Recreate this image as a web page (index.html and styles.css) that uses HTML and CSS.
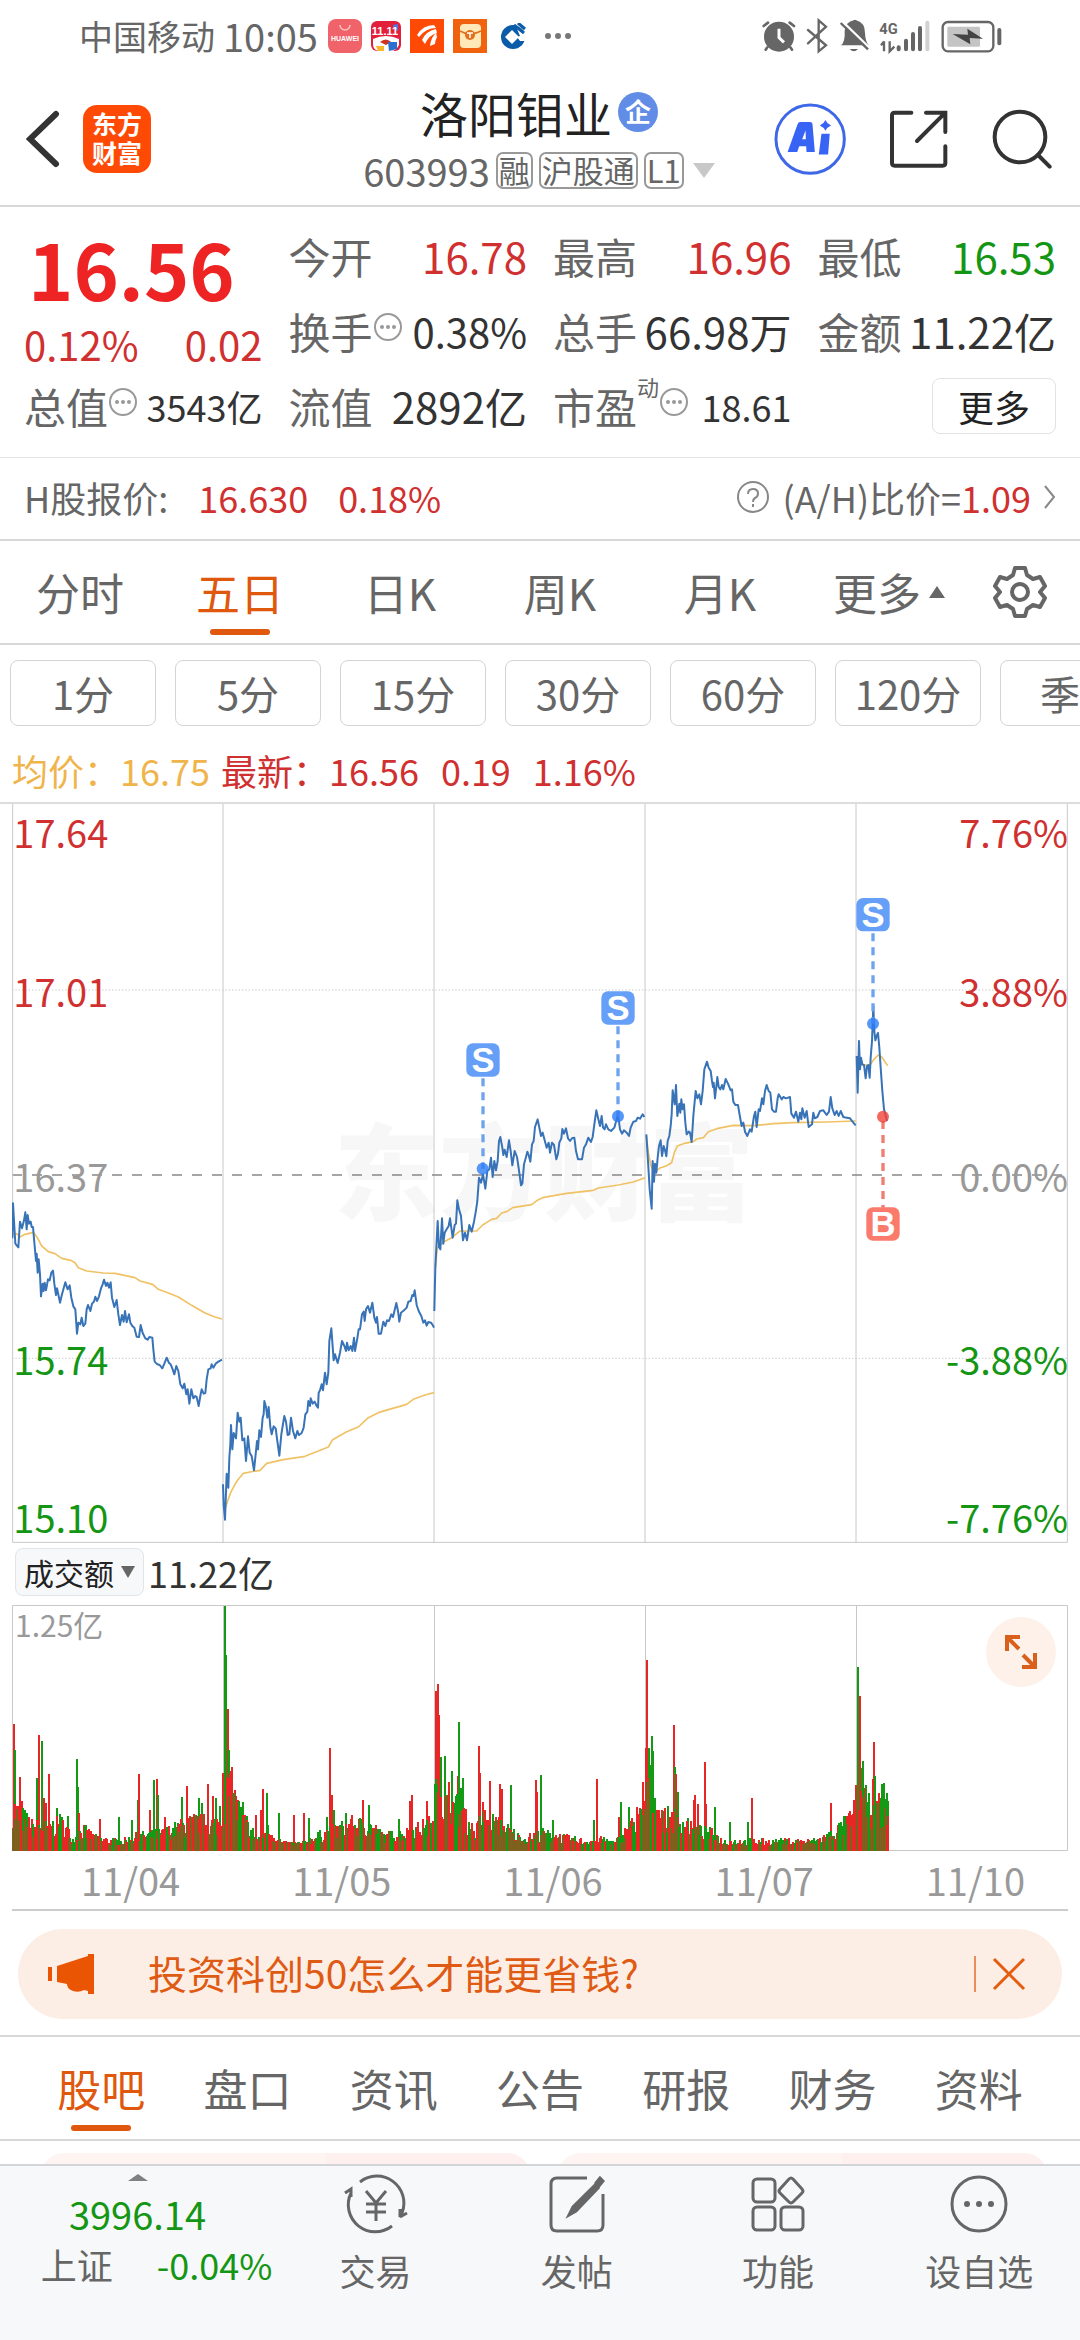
FILE: index.html
```html
<!DOCTYPE html>
<html lang="zh-CN">
<head>
<meta charset="utf-8">
<meta name="viewport" content="width=device-width">
<title>洛阳钼业 603993</title>
<link rel="stylesheet" href="styles.css">
</head>
<body>
<div class="app">
  <div class="status">
    <span class="carrier">中国移动</span><span class="clock">10:05</span>
    <div class="status-apps">
      <svg width="34" height="34" viewBox="0 0 34 34"><rect width="34" height="34" rx="8" fill="#f0636a"/><path d="M12 6a5 5 0 0 0 10 0" fill="none" stroke="#fbc3bf" stroke-width="1.5"/><text x="17" y="22" font-size="7" font-weight="700" text-anchor="middle" fill="#fff" class="latin">HUAWEI</text></svg>
      <svg width="30" height="32" viewBox="0 0 30 32"><rect y="1" width="30" height="30" rx="6" fill="#e3203c"/><path d="M2 19q13-6 26 0v6q-3 6-8 6H8q-6-1-6-7z" fill="#fff"/><path d="M9 22q6-5 11 0l-5 3z" fill="#c32"/><path d="M5 26h8v5H7z" fill="#f8b62c"/><path d="M17 22h9v7l-8 2z" fill="#2c6fd2"/><path d="M22 5l5-1v7l-4-2z" fill="#4a7be0"/><text x="14" y="15" font-size="11" font-weight="700" text-anchor="middle" fill="#fff" class="latin">11.11</text></svg>
      <svg class="app3" width="34" height="34" viewBox="0 0 34 34"><rect width="34" height="34" fill="#ff4a05"/><g fill="#fff"><path d="M7 16Q13 6 24 6l2 3Q16 9 9 18z"/><path d="M12 21Q16 12 26 10l1 4q-8 2-12 11z"/><path d="M20 27q1-9 6-13l1 4q-2 4-2 7z"/></g></svg>
      <svg class="app4" width="34" height="34" viewBox="0 0 34 34"><rect width="34" height="34" fill="#f0620e"/><rect x="7" y="5" width="21" height="24" rx="4" fill="#ffe9b8"/><path d="M7 12q10 6 21 0" fill="none" stroke="#e0701c" stroke-width="1.5"/><circle cx="17" cy="16" r="5" fill="#e2701c"/><path d="M14 14h6M17 14v5" stroke="#fff" stroke-width="1.5"/></svg>
      <svg class="app5" width="26" height="26" viewBox="0 0 26 26"><circle cx="13" cy="14" r="12" fill="#0a5ba8"/><path d="M12 7l7 7-7 7-7-7z" fill="#fff"/><path d="M14 -1l13 13v6h-7l-3-4 3-1z" fill="#fff"/><path d="M14 2l10 8M18 0l7 6" stroke="#0a5ba8" stroke-width="3"/></svg>
      <svg class="dots" width="26" height="8" viewBox="0 0 26 8" fill="#777"><circle cx="3" cy="4" r="3"/><circle cx="13" cy="4" r="3"/><circle cx="23" cy="4" r="3"/></svg>
    </div>
    <svg class="status-sys" width="240" height="36" viewBox="66 24 720 108">
      <g fill="none" stroke="#666" stroke-width="7" stroke-linecap="round">
        <path d="M71 48l13-10M149 38l13 10M82 112l-5 7M151 112l5 7" stroke-width="8"/>
        <path d="M204 60l54 46-22 18V31l22 19-54 50"/>
      </g>
      <circle cx="117" cy="80" r="45" fill="#666"/><path d="M117 56v27l15 14" fill="none" stroke="#fff" stroke-width="9"/>
      <path d="M302 106q14-8 12-44 3-26 27-31 4-3 8 0 26 7 26 38 1 26 11 37z" fill="#666"/><path d="M329 117h25q-12 14-25 0z" fill="#666"/><path d="M307 34l84 82" stroke="#fff" stroke-width="7"/><path d="M302 39l82 79" stroke="#666" stroke-width="7"/>
      <text x="418" y="72" fill="#666" class="net">4G</text>
      <path d="M432 94v30M432 94l-9 12M449 94v30l14-14" stroke="#666" stroke-width="7" fill="none"/>
      <g stroke-width="12" stroke-linecap="round" stroke="#666"><path d="M476 112v6M498 92v26M519 72v46M540 54v64"/><path d="M562 38v80" stroke="#d2d2d2"/></g>
      <rect x="608" y="36" width="152" height="88" rx="16" fill="#fff" stroke="#666" stroke-width="7"/><rect x="622" y="50" width="98" height="60" rx="4" fill="#c4c4c4"/><path d="M638 72l46 2-2-18 47 30-40-2 2 19z" fill="#444"/><path d="M778 60v40" stroke="#666" stroke-width="12" stroke-linecap="round"/>
    </svg>
  </div>

  <header class="header">
    <div class="header-left">
      <button class="plain" aria-label="返回"><svg width="34" height="58" viewBox="0 0 34 58"><path d="M30 4L4 29l26 25" fill="none" stroke="#333" stroke-width="6" stroke-linecap="round"/></svg></button>
      <a class="logo" href="#home">东方<br>财富</a>
    </div>
    <div class="title">
      <h1>洛阳钼业<span class="badge">企</span></h1>
      <div class="sub">603993 <span class="tag">融</span><span class="tag">沪股通</span><span class="tag">L1</span><i class="drop"></i></div>
    </div>
    <div class="header-right">
      <button class="plain" aria-label="AI"><svg width="72" height="72" viewBox="97 279 217 217"><circle cx="206" cy="388" r="103" fill="none" stroke="#3f68e8" stroke-width="9"/><path d="M176 336h30q6 0 7 6l7 85h-25l-1-18h-21l-6 18h-29l30-84q2-7 8-7zm17 52l-1-26-10 26zM240 372h25l-5 62h-28z" fill="#3864f6"/><path d="M252 330q5 12 17 17-12 5-17 16-5-11-17-16 12-5 17-17z" fill="#3864f6"/></svg></button>
      <button class="plain" aria-label="分享"><svg width="60" height="60" viewBox="440 298 180 180"><path d="M507 309h-50q-8 0-8 8v143q0 8 8 8h144q8 0 8-8v-50M551 309h58v58M606 312l-82 82" fill="none" stroke="#333" stroke-width="12" stroke-linecap="round"/></svg></button>
      <button class="plain" aria-label="搜索"><svg width="60" height="60" viewBox="752 295 180 180"><circle cx="836" cy="379" r="76" fill="none" stroke="#333" stroke-width="12"/><path d="M890 433l35 35" stroke="#333" stroke-width="12" stroke-linecap="round"/></svg></button>
    </div>
  </header>

  <section class="quote">
    <div class="now"><strong>16.56</strong><div class="chg"><span>0.12%</span><span>0.02</span></div></div>
    <div class="cell"><span>今开</span><b class="up">16.78</b></div>
    <div class="cell"><span>最高</span><b class="up">16.96</b></div>
    <div class="cell"><span>最低</span><b class="down">16.53</b></div>
    <div class="cell"><span>换手</span><svg class="info" viewBox="0 0 30 30"><use href="#info"/></svg><b class="mid">0.38%</b></div>
    <div class="cell"><span>总手</span><b>66.98万</b></div>
    <div class="cell"><span>金额</span><b>11.22亿</b></div>
    <div class="cell"><span>总值</span><svg class="info" viewBox="0 0 30 30"><g id="info"><circle cx="15" cy="15" r="13" fill="none" stroke="#999" stroke-width="2"/><g fill="#999"><circle cx="9" cy="15" r="2"/><circle cx="15" cy="15" r="2"/><circle cx="21" cy="15" r="2"/></g></g></svg><b class="small">3543亿</b></div>
    <div class="cell"><span>流值</span><b>2892亿</b></div>
    <div class="cell"><span>市盈</span><sup>动</sup><svg class="info" viewBox="0 0 30 30"><use href="#info"/></svg><b class="small">18.61</b></div>
    <div class="cell end"><button class="more">更多</button></div>
  </section>

  <a class="hshare" href="#h">
    <span>H股报价:</span><span class="up hp">16.630</span><span class="up">0.18%</span>
    <span class="ratio"><svg width="34" height="34" viewBox="0 0 34 34"><circle cx="17" cy="17" r="15" fill="none" stroke="#888" stroke-width="2"/><path d="M12 14q0-5 5-5t5 4.500q0 3-3 4.500-2 1-2 4M17 24v3" fill="none" stroke="#888" stroke-width="2"/></svg><span>(A/H)比价=<span class="up">1.09</span></span><svg width="12" height="26" viewBox="0 0 12 26"><path d="M1 2l9 11-9 11" fill="none" stroke="#888" stroke-width="2"/></svg></span>
  </a>

  <nav class="tabs periods">
    <a href="#1">分时</a><a class="on" href="#5">五日</a><a href="#d">日K</a><a href="#w">周K</a><a href="#m">月K</a><a class="menu" href="#more">更多<i class="tri"></i></a>
    <button class="plain" aria-label="设置"><svg width="54" height="54" viewBox="0 0 54 54" fill="none" stroke="#666" stroke-width="4" stroke-linejoin="round"><path d="M22 3h10l2 7 6 4 7-2 5 9-5 6 5 6-5 9-7-2-6 4-2 7H22l-2-7-6-4-7 2-5-9 5-6-5-6 5-9 7 2 6-4z"/><circle cx="27" cy="27" r="8"/></svg></button>
  </nav>

  <div class="chips">
    <button>1分</button><button>5分</button><button>15分</button><button>30分</button><button>60分</button><button>120分</button><button>季K</button>
  </div>

  <div class="legend"><span class="avg">均价：</span><span class="avg num">16.75</span><span>最新：</span><span class="num2">16.56</span><span class="num2">0.19</span><span>1.16%</span></div>

  <div class="chart-wrap">
    <svg class="chart" viewBox="0 0 3168 2217">
      <text class="watermark" x="966" y="1224">东方财富</text>
      <g class="grid"><path d="M633 0V2217M1266 0V2217M1899 0V2217M2532 0V2217"/><path class="dot" d="M0 558H3168M0 1663H3168"/><path class="dash" d="M0 1113H3168"/><path d="M2 0V2215H3166V0"/></g>
      <g class="axis">
        <g class="up"><text x="4" y="133">17.64</text><text x="4" y="609">17.01</text><text class="r" x="3168" y="133">7.76%</text><text class="r" x="3168" y="609">3.88%</text></g>
        <g class="flat"><text x="4" y="1163">16.37</text><text class="r" x="3168" y="1163">0.00%</text></g>
        <g class="down"><text x="4" y="1713">15.74</text><text x="4" y="2187">15.10</text><text class="r" x="3168" y="1713">-3.88%</text><text class="r" x="3168" y="2187">-7.76%</text></g>
      </g>
      <g transform="translate(-36 1041)">
        <polyline class="mean" points="37,250 50,248 60,258 75,250 100,244 112,260 125,285 145,302 165,308 185,322 212,328 225,335 235,350 260,360 310,366 345,367 405,380 420,390 458,400 475,415 505,426 535,438 575,463 615,486 645,498 666,504"/>
        <polyline class="mean" points="675,1075 683,1050 692,1025 705,1000 715,985 730,967 750,963 780,958 800,937 850,926 915,916 955,900 985,888 998,866 1040,842 1075,828 1105,800 1135,785 1165,776 1220,760 1240,745 1275,732 1302,725"/>
        <polyline class="price" points="37,262 39,157 46,278 55,289 60,212 66,232 72,208 76,184 80,235 83,192 87,218 92,212 95,228 99,228 104,285 108,330 110,308 113,365 116,325 120,370 123,436 128,398 131,420 134,395 138,418 144,385 149,388 154,365 159,359 163,398 168,432 171,412 176,435 180,455 186,430 191,412 196,394 203,415 209,403 214,440 220,466 226,475 231,548 235,515 241,520 245,500 250,525 256,518 260,475 264,462 271,480 276,458 282,452 286,437 291,450 297,436 303,412 308,400 312,386 318,405 322,395 327,410 332,394 336,440 343,468 350,447 355,490 360,522 366,492 371,512 375,480 380,514 387,490 391,515 397,525 403,530 410,557 417,558 422,522 428,546 436,562 443,566 448,558 457,560 460,595 464,632 472,640 479,642 487,652 493,638 500,620 507,636 512,640 518,655 523,670 529,645 535,660 541,700 548,712 553,698 559,730 563,715 568,758 574,715 580,742 586,735 590,738 596,765 601,735 605,715 611,728 616,726 620,685 625,655 632,652 635,640 640,650 647,638 655,632 666,626"/>
        <polyline class="price" points="669,1000 671,1060 675,1106 680,968 685,1010 688,920 691,880 693,822 697,895 701,846 708,862 713,785 718,812 722,800 727,868 733,862 738,930 744,856 749,905 755,915 762,958 768,900 771,870 774,895 778,838 783,858 788,800 791,790 793,750 798,768 802,800 806,768 811,828 815,850 821,826 827,832 832,870 838,914 844,850 848,825 853,795 858,812 863,852 868,850 873,800 879,840 886,862 892,840 897,852 905,846 911,830 916,790 922,782 925,750 930,765 932,742 938,758 944,752 950,765 954,770 956,725 960,718 965,700 969,718 975,665 980,700 985,665 988,570 994,532 1001,628 1005,610 1013,636 1020,605 1026,570 1033,585 1038,600 1041,575 1046,598 1052,585 1057,600 1062,560 1065,600 1072,562 1076,535 1080,535 1086,490 1091,482 1094,510 1098,475 1104,465 1110,485 1117,455 1123,500 1128,515 1131,498 1136,548 1143,548 1150,512 1156,525 1161,508 1167,510 1174,490 1179,498 1189,456 1194,480 1198,512 1203,485 1212,478 1220,470 1225,452 1232,450 1237,432 1241,435 1244,418 1250,462 1256,480 1264,495 1270,515 1275,508 1280,524 1285,513 1293,515 1298,522 1302,530"/>
      </g>
      <g transform="translate(1224 591)">
        <polyline class="mean" points="46,800 52,740 72,722 95,710 120,690 170,690 188,672 215,655 230,652 245,636 260,632 278,620 335,611 352,598 368,590 405,583 440,577 520,568 535,561 595,552 640,543 675,530"/>
        <polyline class="price" points="43,930 46,800 53,660 57,738 61,745 66,652 70,728 74,695 80,685 86,675 90,652 98,710 104,672 108,668 112,598 117,625 123,645 129,718 135,695 141,718 148,672 155,692 162,662 168,628 172,600 177,530 183,545 189,520 196,563 202,510 208,505 213,470 218,528 223,480 228,508 233,480 237,420 241,408 247,440 250,462 254,446 260,468 267,418 272,450 277,493 284,450 291,468 297,508 303,553 307,548 312,490 318,468 322,452 326,462 331,482 336,430 341,420 345,378 353,355 360,390 363,405 368,395 376,425 380,440 386,425 390,455 396,425 402,432 409,475 414,458 418,425 424,412 427,384 432,398 438,382 444,412 450,420 456,412 463,410 468,450 474,475 486,475 492,440 498,430 505,410 513,423 518,408 523,370 529,328 534,350 540,375 545,345 549,380 554,385 558,370 565,385 573,390 583,380 590,355 594,340 600,385 606,398 612,388 620,395 627,405 632,380 640,362 648,360 653,350 660,353 668,340 673,348"/>
        <g class="sell"><path d="M189 232V503M594 76V346"/><circle cx="188" cy="503" r="18"/><circle cx="594" cy="346" r="18"/><rect x="139" y="127" width="100" height="100" rx="20"/><rect x="544" y="-29" width="100" height="100" rx="20"/><text x="189" y="214">S</text><text x="594" y="58">S</text></g>
      </g>
      <g transform="translate(1884 171)">
        <polyline class="mean" points="19,825 26,880 33,915 42,935 58,922 78,915 95,905 103,875 112,855 130,848 160,842 170,834 190,830 205,812 230,803 280,793 340,794 400,788 460,785 560,783 647,780"/>
        <polyline class="mean" points="660,612 690,612 702,595 715,582 725,588 743,614"/>
        <polyline class="price" points="19,820 24,900 29,985 35,1043 38,900 42,962 45,908 49,935 53,890 57,855 62,838 66,885 71,855 75,868 79,886 83,840 88,825 92,795 95,760 98,688 104,730 108,672 112,765 118,728 121,755 124,715 128,745 132,730 136,785 140,820 146,812 150,815 155,843 160,765 167,690 172,712 178,700 183,730 188,690 193,625 201,602 206,620 212,630 216,660 219,678 221,665 225,712 232,648 236,678 241,685 246,672 250,685 257,654 265,670 272,688 276,685 280,722 286,732 294,732 300,768 305,795 310,785 315,812 322,825 330,805 335,812 342,765 346,752 350,798 356,745 360,750 366,712 370,730 375,690 380,672 386,690 391,695 396,745 402,752 408,752 413,712 416,700 425,715 430,708 438,712 450,708 454,758 462,770 468,752 475,782 480,755 484,775 487,742 494,770 500,750 506,798 516,790 520,755 524,772 532,768 540,750 550,748 560,762 567,752 572,708 577,742 584,762 590,750 596,765 602,750 610,768 620,770 630,772 640,785 647,793"/>
        <polyline class="price" points="650,585 653,695 657,540 660,625 663,590 667,610 672,612 677,652 681,615 685,612 689,650 692,590 696,540 700,435 703,510 706,538 710,525 714,516 718,560 722,620 727,690 732,745 736,760 741,780"/>
        <g class="sell"><path d="M699 217V488"/><circle cx="699" cy="488" r="18"/><rect x="649" y="111" width="100" height="100" rx="20"/><text x="699" y="198">S</text></g>
        <g class="buy"><path d="M729 780V1040"/><circle cx="729" cy="767" r="18"/><rect x="679" y="1039" width="100" height="100" rx="20"/><text x="729" y="1126">B</text></g>
      </g>
    </svg>
  </div>

  <div class="metric"><button>成交额<i class="drop dark"></i></button><span>11.22亿</span></div>
  <div class="volume">
    <svg class="chart" viewBox="0 0 1056 246"><path class="frame" d="M211.500 1V245M422.500 1V245M633.500 1V245M844.500 1V245M.5 .5H1055.500V245.500H.5z"/><g id="bars"></g><text class="vmax" x="3" y="32">1.25亿</text></svg>
    <button class="expand" aria-label="全屏"><svg width="34" height="36" viewBox="0 0 34 36" fill="none" stroke="#d9601c" stroke-width="4"><path d="M16 3H3v14M3 3l12 12M18 33h13V19M31 33L19 21"/></svg></button>
  </div>
  <div class="dates"><span>11/04</span><span>11/05</span><span>11/06</span><span>11/07</span><span>11/10</span></div>

  <div class="banner">
    <svg width="46" height="40" viewBox="0 0 46 40" fill="#ea5504"><path d="M0 13h4v14H0zM9 12L40 2V0h6v40h-6v-3l-4-1q-5 3-11 1-6-2-6-7L9 28z"/></svg>
    <a href="#promo">投资科创50怎么才能更省钱?</a>
    <button class="plain close" aria-label="关闭"><svg width="34" height="34" viewBox="0 0 34 34"><path d="M2 2l30 30M32 2L2 32" stroke="#e55c10" stroke-width="3"/></svg></button>
  </div>

  <nav class="tabs sections">
    <a class="on" href="#guba">股吧</a><a href="#pan">盘口</a><a href="#news">资讯</a><a href="#notice">公告</a><a href="#report">研报</a><a href="#fin">财务</a><a href="#profile">资料</a>
  </nav>
  <div class="cards"><div></div><div></div></div>

  <footer class="bar">
    <a class="index" href="#sh"><i class="tri"></i><b>3996.14</b><span><em>上证</em>-0.04%</span></a>
    <a href="#trade"><svg width="66" height="60" viewBox="0 0 66 60" fill="none" stroke="#666" stroke-width="3"><path d="M17 8a27 27 0 0 1 42 31l-2 4v-8M57 43l7-4M49 52A27 27 0 0 1 8 19l0-4-6 4M8 15v8"/><path d="M23 17l10 12 10-12M23 30h20M23 38h20M33 29v18"/></svg>交易</a>
    <a href="#post"><svg width="56" height="60" viewBox="0 0 56 60" fill="none" stroke="#666" stroke-width="3"><path d="M38 4H8q-6 0-6 6v41q0 6 6 6h40q6 0 6-6V20"/><path d="M51 4l3 3-4 5-3-3zM46 11l3 3-22 23-7 4 4-8z" fill="#666"/></svg>发帖</a>
    <a href="#func"><svg width="54" height="60" viewBox="0 0 54 60" fill="none" stroke="#666" stroke-width="3"><rect x="2" y="5" width="22" height="23" rx="4"/><rect x="2" y="33" width="22" height="23" rx="4"/><rect x="30" y="33" width="22" height="23" rx="4"/><path d="M38 5q2-2 4 0l9 10q2 2 0 4l-9 9q-2 2-4 0l-9-9q-2-2 0-4z"/></svg>功能</a>
    <a href="#fav"><svg width="60" height="60" viewBox="0 0 60 60"><circle cx="30" cy="30" r="27" fill="none" stroke="#666" stroke-width="3"/><g fill="#666"><circle cx="18" cy="30" r="3"/><circle cx="30" cy="30" r="3"/><circle cx="42" cy="30" r="3"/></g></svg>设自选</a>
  </footer>
</div>
<script src="volume.js"></script>
</body>
</html>
```
FILE: styles.css
```css
* { box-sizing: border-box; }
body { margin: 0; background: #fff; color: #666; font-family: "Noto Sans CJK SC", "Noto Sans", sans-serif; font-size: 36px; line-height: 48px; }
a { color: inherit; text-decoration: none; }
button { font: inherit; color: inherit; background: #fff; border: 1px solid #d4d4d4; border-radius: 8px; padding: 0; }
i, em { font-style: normal; }
b { font-weight: 400; }
svg { display: block; flex: none; }
.plain { border: 0; background: none; display: flex; align-items: center; justify-content: center; }
.up { color: #d0302f; fill: #d0302f; }
.down { color: #149614; fill: #149614; }
.flat { fill: #999; }
.app { display: flex; flex-direction: column; min-height: 100vh; overflow: hidden; }

.status { display: flex; align-items: center; height: 72px; padding: 0 78px 0 79px; }
.carrier { font-size: 34px; margin-right: 8px; }
.clock { font-size: 38px; }
.status-apps { display: flex; align-items: center; gap: 9px; margin-left: 10px; }
.app5 { margin-left: 4px; }
.dots { margin-left: 10px; }
.status-sys { margin-left: auto; }
.latin { font-family: "Liberation Sans", sans-serif; }
.net { font-family: "Roboto", sans-serif; font-size: 44px; font-weight: 700; }

.header { display: grid; grid-template-columns: 1fr auto 1fr; align-items: center; height: 135px; padding: 0 28px 0 26px; border-bottom: 2px solid #d8d8d8; }
.header-left { display: flex; align-items: center; gap: 23px; }
.logo { width: 68px; height: 68px; border-radius: 14px; background: #ff4a05; color: #fff; font-size: 25px; font-weight: 700; line-height: 29px; padding-top: 4px; text-align: center; }
.title { display: flex; flex-direction: column; align-items: center; }
.title h1 { display: flex; align-items: center; margin: 0; font-size: 48px; font-weight: 400; line-height: 64px; color: #222; gap: 6px; }
.badge { width: 40px; height: 40px; border-radius: 50%; background: #628de6; color: #fff; font-size: 26px; font-weight: 700; line-height: 38px; text-align: center; }
.sub { display: flex; align-items: center; gap: 6px; font-size: 38px; line-height: 54px; }
.tag { border: 2px solid #999; border-radius: 7px; font-size: 31px; line-height: 32px; height: 37px; padding: 0 1px; }
.drop { border: 11px solid transparent; border-top: 15px solid #c8c8c8; border-bottom: 0; margin-left: 3px; }
.header-right { display: flex; align-items: center; justify-content: flex-end; gap: 43px; }

.quote { display: grid; grid-template-columns: repeat(4, 1fr); grid-auto-rows: 75px; column-gap: 26px; padding: 11px 24px 14px; border-bottom: 1px solid #e2e2e2; }
.now { grid-row: span 2; display: flex; flex-direction: column; }
.now strong { font-size: 77px; line-height: 100px; font-weight: 700; color: #ee2323; padding-left: 4px; }
.chg { display: flex; justify-content: space-between; font-size: 40px; line-height: 52px; color: #d0302f; }
.cell { display: flex; align-items: center; font-size: 42px; white-space: nowrap; }
.cell b { margin-left: auto; color: #333; }
.cell b.up { color: #d0302f; }
.cell b.down { color: #149614; }
.cell b.mid { font-size: 40px; }
.cell b.small { font-size: 36px; }
.info { width: 30px; height: 30px; margin-bottom: 8px; }
.cell sup { font-size: 22px; line-height: 24px; align-self: flex-start; margin-top: 6px; }
.end { justify-content: flex-end; }
.more { width: 124px; height: 56px; font-size: 36px; line-height: 50px; color: #222; border-color: #e2e2e2; }

.hshare { display: flex; align-items: center; height: 83px; padding: 0 24px 4px; border-bottom: 2px solid #d8d8d8; }
.hp { margin: 0 30px; }
.ratio { display: flex; align-items: center; gap: 13px; margin-left: auto; }

.tabs { display: grid; font-size: 44px; text-align: center; border-bottom: 2px solid #d8d8d8; height: 104px; }
.tabs a { display: flex; justify-content: center; align-items: center; position: relative; }
.tabs .on { color: #e0570e; }
.tabs .on::after { content: ""; position: absolute; bottom: 8px; width: 60px; height: 6px; border-radius: 3px; background: #e0570e; }
.periods { grid-template-columns: repeat(6, 4fr) 3fr; }
.periods .menu { padding-left: 18px; }
.tri { border: 8px solid transparent; border-bottom: 12px solid #666; border-top: 0; margin-left: 8px; }

.chips { display: flex; gap: 19px; padding: 15px 0 0 10px; overflow: hidden; }
.chips button { flex: none; width: 146px; height: 66px; font-size: 40px; line-height: 60px; }

.legend { display: flex; padding: 20px 12px 8px; color: #d0302f; line-height: 48px; }
.avg { color: #efb54c; }
.num { margin-right: 11px; }
.num2 { margin-right: 22px; }

.chart-wrap { border-top: 2px solid #ddd; padding: 0 12px; }
.chart { width: 100%; height: auto; }
.grid { fill: none; stroke: #c8c8c8; stroke-width: 3; }
.grid .dot { stroke-dasharray: 4 6; }
.grid .dash { stroke: #888; stroke-width: 5; stroke-dasharray: 30 30; }
.axis { font-size: 114px; }
.r { text-anchor: end; }
.watermark { font-size: 315px; font-weight: 900; fill: #f7f7f7; }
.price, .mean { fill: none; stroke: #3873b8; stroke-width: 6; stroke-linejoin: round; }
.mean { stroke: #f0c265; stroke-width: 5; }
.sell, .buy { fill: #659ff8; stroke: none; font-family: "Liberation Sans", sans-serif; font-size: 104px; font-weight: 700; text-anchor: middle; }
.sell path { stroke: #6ea3ee; stroke-width: 10; stroke-dasharray: 24 18; }
.sell circle { fill: #2d7df6; fill-opacity: .8; }
.buy { fill: #fa7a6c; }
.buy path { stroke: #f07d72; stroke-width: 10; stroke-dasharray: 24 18; }
.buy circle { fill: #f04438; fill-opacity: .8; }
.sell text, .buy text { fill: #fff; }

.metric { display: flex; align-items: center; gap: 4px; height: 62px; padding: 0 15px 4px; color: #333; }
.metric button { display: flex; align-items: center; height: 48px; padding: 0 8px; background: #f7f8fa; border-color: #e3e4e8; color: #222; font-size: 30px; gap: 4px; }
.dark { border-width: 7px; border-top: 12px solid #666; }
.volume { position: relative; padding: 0 12px; }
.frame { fill: none; stroke: #c8c8c8; }
.vmax { font-size: 30px; fill: #999; }
.bar-up { fill: #e82626; }
.bar-down { fill: #149a14; }
.expand { position: absolute; top: 12px; right: 24px; width: 70px; height: 70px; border: 0; border-radius: 50%; background: #fef1ea; display: flex; align-items: center; justify-content: center; }
.dates { display: grid; grid-template-columns: repeat(5, 1fr); margin: 0 12px; height: 60px; align-items: center; border-bottom: 2px solid #ccc; color: #999; font-size: 38px; text-align: center; }
.dates span { padding-left: 26px; }

.banner { display: flex; align-items: center; height: 90px; margin: 18px 18px 16px; padding: 0 36px 0 30px; border-radius: 45px; background: #fdeee5; color: #df5a13; font-size: 39px; }
.banner a { margin: 0 0 4px 54px; }
.close { margin-left: auto; border-left: 2px solid #eb8d5a; border-radius: 0; padding-left: 16px; height: 36px; }

.sections { grid-template-columns: repeat(7, 1fr); padding: 0 28px; border-top: 2px solid #d8d8d8; height: 106px; }
.cards { display: grid; grid-template-columns: 1fr 1fr; gap: 26px; padding: 12px 32px 0 40px; height: 23px; overflow: hidden; }
.cards div { height: 60px; border-radius: 24px; background: linear-gradient(90deg, #fef5f3 58%, #fdf0ee 58%); }

.bar { flex: 1; display: grid; grid-template-columns: 275px repeat(4, 1fr); background: #f7f8fa; border-top: 2px solid #d2d4d8; padding-bottom: 36px; }
.bar a { display: flex; flex-direction: column; align-items: center; padding-top: 8px; gap: 12px; }
.bar .index { gap: 0; color: #149614; line-height: 50px; }
.index b { font-size: 38px; margin-top: 8px; }
.index span { padding-left: 38px; }
.index em { color: #666; margin-right: 44px; }
.index .tri { margin: 0; border-width: 10px; border-top: 0; border-bottom: 7px solid #808080; }
```
FILE: volume.js
```js
// Turnover per minute: [x, height, direction] for the spikes, [x, level] for the floor between them.
const spikes = "1,127,r 2,101,g 7,74,r 9,50,r 11,40,r 24,73,g 26,116,r 29,110,g 31,53,r 33,48,r 36,77,r 44,43,g 47,37,g 55,35,g 64,92,g 65,64,g 66,38,r 87,32,r 106,34,g 119,31,g 125,51,g 126,77,r 137,41,r 141,71,g 144,72,r 145,56,g 152,34,r 169,54,g 174,65,r 186,53,g 189,48,g 195,67,r 200,55,r 203,53,g 207,45,g 210,78,r 212,245,g 213,196,g 215,142,r 216,101,g 219,84,r 222,61,r 225,51,r 230,49,g 234,35,g 243,36,r 248,41,r 250,62,r 254,58,g 266,38,g 281,36,r 291,38,r 296,33,g 314,34,g 317,103,r 319,56,r 321,41,g 333,38,g 350,51,r 356,46,g 386,32,g 397,50,r 399,56,r 414,50,r 416,35,r 423,160,r 425,167,r 426,136,r 428,94,g 432,95,g 436,69,r 439,80,g 445,75,r 446,129,g 448,63,g 450,73,g 466,105,r 467,78,r 470,49,r 477,70,r 487,67,r 489,62,r 498,66,g 523,71,r 524,59,r 528,76,g 540,31,g 581,31,g 584,72,r 606,34,r 608,49,g 616,44,g 624,44,r 630,69,r 633,103,r 634,191,r 636,103,g 639,115,g 640,100,g 649,41,r 655,38,r 661,126,r 662,84,g 663,77,r 665,59,g 675,33,g 681,51,r 682,56,r 685,47,r 692,89,r 693,47,r 702,44,g 717,29,g 735,29,g 739,53,r 818,48,r 841,47,g 844,61,r 845,184,g 847,155,r 849,83,g 850,90,g 853,59,g 855,46,r 860,72,r 861,109,r 862,75,g 866,58,r 869,67,g 871,68,g 873,52,g 874,58,g 875,50,g";
const floor = [[0,45],[20,25],[35,25],[50,28],[60,12],[70,22],[85,12],[110,10],[125,15],[150,18],[180,30],[210,28],[215,70],[222,50],[232,30],[245,12],[255,22],[270,8],[290,8],[310,18],[340,28],[360,25],[370,15],[390,18],[410,25],[420,25],[424,80],[430,50],[445,45],[455,30],[462,18],[470,35],[490,25],[510,12],[530,18],[550,14],[570,10],[590,12],[602,8],[620,28],[631,40],[636,75],[642,50],[650,35],[660,35],[668,30],[680,22],[700,18],[710,10],[760,10],[800,10],[820,18],[840,35],[846,70],[855,45],[865,42],[876,42]];
let seed = 7;
const rand = () => (seed = (seed * 16807) % 2147483647) / 2147483647;
function level(x) {
  let i = 1;
  while (i < floor.length - 1 && floor[i][0] < x) i++;
  const [x0, y0] = floor[i - 1], [x1, y1] = floor[i];
  return y0 + (y1 - y0) * (x - x0) / (x1 - x0);
}
const rect = (x, h, up) => `<rect class="${up ? "bar-up" : "bar-down"}" x="${x}" y="${246 - h}" width="2" height="${h}"/>`;
let out = "";
for (const s of spikes.split(" ")) {
  const [x, h, d] = s.split(",");
  out += rect(+x, +h, d === "r");
}
for (let x = 0; x < 876; x++) {
  out += rect(x, Math.round(level(x) * (0.5 + rand() * 0.8)), rand() < 0.58);
}
document.getElementById("bars").innerHTML = out;
```
